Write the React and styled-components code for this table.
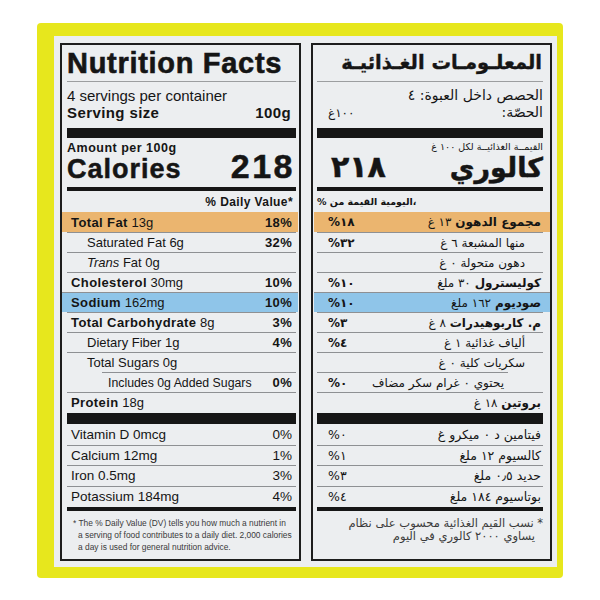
import React from 'react'
import styled, { createGlobalStyle } from 'styled-components'

const FONT_EN = '"Liberation Sans", Arial, sans-serif'
const FONT_AR = '"DejaVu Sans", "Noto Sans", sans-serif'

const TINTS = {
  fat: '#ebb56f',
  sodium: '#8fc5e9',
}

const GlobalStyle = createGlobalStyle`
  html, body {
    margin: 0;
    padding: 0;
    background: #ffffff;
  }
  body {
    font-family: ${FONT_EN};
    color: #151515;
  }
`

const EN = {
  dir: 'ltr',
  font: FONT_EN,
  padL: 5,
  padR: 3,
  rowS: 4,
  rowE: 4,
  rows: [
    { label: 'Total Fat', amount: '13g', pct: '18%', bold: true, tint: 'fat' },
    { label: 'Saturated Fat 6g', pct: '32%', indent: 1 },
    { label: <><i>Trans</i> Fat 0g</>, indent: 1 },
    { label: 'Cholesterol', amount: '30mg', pct: '10%', bold: true },
    { label: 'Sodium', amount: '162mg', pct: '10%', bold: true, tint: 'sodium' },
    { label: 'Total Carbohydrate', amount: '8g', pct: '3%', bold: true },
    { label: 'Dietary Fiber 1g', pct: '4%', indent: 1 },
    { label: 'Total Sugars 0g', indent: 1 },
    { label: 'Includes 0g Added Sugars', pct: '0%', indent: 2 },
    { label: 'Protein', amount: '18g', bold: true },
  ],
  vitamins: [
    { label: 'Vitamin D 0mcg', pct: '0%' },
    { label: 'Calcium 12mg', pct: '1%' },
    { label: 'Iron 0.5mg', pct: '3%' },
    { label: 'Potassium 184mg', pct: '4%' },
  ],
}

const AR = {
  dir: 'rtl',
  font: FONT_AR,
  padL: 4,
  padR: 7,
  rowS: 2,
  rowE: 11,
  rows: [
    { label: 'مجموع الدهون', amount: '١٣ غ', pct: '%١٨', bold: true, tint: 'fat' },
    { label: 'منها المشبعة ٦ غ', pct: '%٣٢', indent: 1 },
    { label: 'دهون متحولة ٠ غ', indent: 1 },
    { label: 'كوليسترول', amount: '٣٠ ملغ', pct: '%١٠', bold: true },
    { label: 'صوديوم', amount: '١٦٢ ملغ', pct: '%١٠', bold: true, tint: 'sodium' },
    { label: 'م. كاربوهيدرات', amount: '٨ غ', pct: '%٣', bold: true },
    { label: 'ألياف غذائية ١ غ', pct: '%٤', indent: 1 },
    { label: 'سكريات كلية ٠ غ', indent: 1 },
    { label: 'يحتوي ٠ غرام سكر مضاف', pct: '%٠', indent: 2 },
    { label: 'بروتين', amount: '١٨ غ', bold: true },
  ],
  vitamins: [
    { label: 'فيتامين د ٠ ميكرو غ', pct: '%٠' },
    { label: 'كالسيوم ١٢ ملغ', pct: '%١' },
    { label: 'حديد ٠٫٥ ملغ', pct: '%٣' },
    { label: 'بوتاسيوم ١٨٤ ملغ', pct: '%٤' },
  ],
}

const Stage = styled.main`
  width: 600px;
  height: 600px;
  box-sizing: border-box;
  padding: 23px 37px 22px 37px;
  display: flex;
  background: #ffffff;
`

const Packet = styled.div`
  flex: 1;
  display: flex;
  background: #e7e71d;
  border-radius: 4px;
  padding: 13px 6px 11px 17px;
`

const Sheet = styled.div`
  flex: 1;
  display: grid;
  grid-template-columns: 1fr 1fr;
  gap: 10px;
  background: #eceef0;
  padding: 7px 5px 6px 6px;
`

const Panel = styled.section`
  direction: ${p => p.$dir};
  font-family: ${p => p.$font};
  border: 2px solid #1d1d1d;
  padding: 0 ${p => p.$padR}px 0 ${p => p.$padL}px;
  display: flex;
  flex-direction: column;
  min-width: 0;
  color: #151515;
`

const Title = styled.h1`
  margin: 0;
  padding: 2px ${p => p.$inset || 0}px 2px;
  font-size: ${p => p.$size}px;
  line-height: 32px;
  font-weight: 700;
  letter-spacing: ${p => p.$spacing || 0}px;
  -webkit-text-stroke: ${p => p.$stroke || 0}px #151515;
  white-space: nowrap;
  border-bottom: 1px solid #9c9ea0;
`

const Servings = styled.div`
  margin-top: 5px;
  display: flex;
  flex-direction: column;
`

const Line = styled.div`
  display: flex;
  justify-content: space-between;
  align-items: baseline;
  height: 17px;
  line-height: 17px;
  font-size: ${p => p.$size || 15}px;
  font-weight: ${p => (p.$bold ? 700 : 400)};
  letter-spacing: ${p => (p.$bold ? 0.4 : 0)}px;
  padding-inline-end: ${p => p.$end || 0}px;
  white-space: nowrap;
`

const Small = styled.span`
  font-size: ${p => p.$size}px;
`

const Bar = styled.div`
  margin-top: ${p => p.$top || 0}px;
  height: ${p => p.$h}px;
  background: #161616;
  flex: none;
`

const Amount = styled.div`
  margin-top: ${p => p.$top}px;
  height: ${p => 18 - p.$top}px;
  line-height: 15px;
  font-size: ${p => p.$size}px;
  font-weight: ${p => (p.$bold ? 700 : 400)};
  letter-spacing: ${p => (p.$bold ? 0.5 : 0)}px;
  white-space: nowrap;
`

const CalRow = styled.div`
  margin-top: -1px;
  height: 23px;
  line-height: 23px;
  display: flex;
  justify-content: space-between;
  align-items: baseline;
  padding-inline-end: ${p => p.$end || 0}px;
  padding-inline-start: ${p => p.$start || 0}px;
`

const CalWord = styled.span`
  font-size: ${p => p.$size}px;
  font-weight: 700;
  letter-spacing: ${p => p.$spacing || 0}px;
  -webkit-text-stroke: 0.5px #151515;
`

const CalNum = styled.span`
  font-size: ${p => p.$size}px;
  font-weight: 700;
  letter-spacing: ${p => p.$spacing || 0}px;
  -webkit-text-stroke: 0.5px #151515;
`

const DV = styled.div`
  margin-top: 4px;
  height: 14px;
  line-height: 14px;
  font-size: ${p => p.$size}px;
  font-weight: 700;
  letter-spacing: ${p => p.$spacing || 0}px;
  text-align: end;
  padding-inline-end: ${p => p.$end || 0}px;
  padding-inline-start: ${p => p.$start || 0}px;
  white-space: nowrap;
`

const Rows = styled.div`
  margin-top: ${p => p.$top || 0}px;
  display: flex;
  flex-direction: column;
`

const Row = styled.div`
  display: flex;
  align-items: center;
  justify-content: space-between;
  box-sizing: border-box;
  height: ${p => p.$h}px;
  border-top: ${p => (p.$first ? 'none' : '1px solid #8e9093')};
  background: ${p => TINTS[p.$tint] || 'transparent'};
  margin-inline-start: ${p => (p.$tint ? -p.$bleedS : p.$indent === 2 ? 35 : 0)}px;
  margin-inline-end: ${p => (p.$tint ? -p.$bleedE : 0)}px;
  padding-inline-start: ${p =>
    p.$s + (p.$tint ? p.$bleedS : 0) + (p.$indent === 1 ? 16 : p.$indent === 2 ? 2 : 0)}px;
  padding-inline-end: ${p => p.$e + (p.$tint ? p.$bleedE : 0)}px;
  font-size: ${p => p.$size}px;
  white-space: nowrap;
`

const Name = styled.span`
  font-size: ${p => p.$size || 'inherit'};
`

const Strong = styled.b`
  font-weight: 700;
  letter-spacing: ${p => p.$spacing || 0}px;
`

const Pct = styled.span`
  direction: ltr;
  unicode-bidi: bidi-override;
  font-weight: ${p => (p.$bold ? 700 : 400)};
  letter-spacing: ${p => (p.$bold ? 0.3 : 0)}px;
`

const Foot = styled.div`
  margin-top: 6px;
  display: flex;
  flex-direction: column;
  color: #3a3a3a;
  font-size: ${p => p.$size}px;
  line-height: ${p => p.$lh}px;
  white-space: nowrap;
`

const FootLine = styled.span`
  padding-inline-start: ${p => p.$indent}px;
`

function NutrientRows({ lang, size, boldSpacing }) {
  return (
    <Rows $top={3}>
      {lang.rows.map((r, i) => (
        <Row
          key={i}
          $first={i === 0}
          $h={20}
          $tint={r.tint}
          $indent={r.indent}
          $s={lang.rowS}
          $e={lang.rowE}
          $bleedS={lang.dir === 'ltr' ? lang.padL : lang.padR}
          $bleedE={lang.dir === 'ltr' ? lang.padR - 1 : lang.padL - 1}
          $size={size}
        >
          <Name $size={r.indent === 2 && lang.dir === 'ltr' ? '12.3px' : null}>
            {r.bold ? <Strong $spacing={boldSpacing}>{r.label}</Strong> : r.label}
            {r.amount ? ' ' + r.amount : null}
          </Name>
          {r.pct ? <Pct $bold>{r.pct}</Pct> : null}
        </Row>
      ))}
    </Rows>
  )
}

function VitaminRows({ lang, size }) {
  return (
    <Rows>
      {lang.vitamins.map((r, i) => (
        <Row
          key={i}
          $first={i === 0}
          $h={20.5}
          $s={lang.rowS}
          $e={lang.rowE}
          $size={size}
        >
          <Name>{r.label}</Name>
          <Pct>{r.pct}</Pct>
        </Row>
      ))}
    </Rows>
  )
}

function EnglishLabel() {
  return (
    <Panel $dir="ltr" $font={EN.font} $padL={EN.padL} $padR={EN.padR}>
      <Title $size={29} $spacing={0.7} $stroke={0.6}>Nutrition Facts</Title>
      <Servings>
        <Line>4 servings per container</Line>
        <Line $bold $end={5}>
          <span>Serving size</span>
          <span>100g</span>
        </Line>
      </Servings>
      <Bar $top={7} $h={10} />
      <Amount $top={3} $size={12.5} $bold>Amount per 100g</Amount>
      <CalRow $end={1}>
        <CalWord $size={27} $spacing={1}>Calories</CalWord>
        <CalNum $size={34} $spacing={2.5}>218</CalNum>
      </CalRow>
      <Bar $top={9} $h={4} />
      <DV $size={12} $spacing={0.4} $end={3}>% Daily Value*</DV>
      <NutrientRows lang={EN} size={13} boldSpacing={0.4} />
      <Bar $top={1} $h={11} />
      <VitaminRows lang={EN} size={13.5} />
      <Bar $top={0.5} $h={4} />
      <Foot $size={8.4} $lh={12}>
        <FootLine $indent={6}>* The % Daily Value (DV) tells you how much a nutrient in</FootLine>
        <FootLine $indent={11}>a serving of food contributes to a daily diet. 2,000 calories</FootLine>
        <FootLine $indent={11}>a day is used for general nutrition advice.</FootLine>
      </Foot>
    </Panel>
  )
}

function ArabicLabel() {
  return (
    <Panel $dir="rtl" $font={AR.font} $padL={AR.padL} $padR={AR.padR}>
      <Title $size={19.5} $stroke={0.4} $inset={1}>المعلـومـات الغـذائيـة</Title>
      <Servings>
        <Line $size={14}>الحصص داخل العبوة: ٤</Line>
        <Line $size={14} $end={11}>
          <span>الحصّة:</span>
          <Small $size={12}>١٠٠غ</Small>
        </Line>
      </Servings>
      <Bar $top={7} $h={10} />
      <Amount $top={1} $size={9.5}>القيمــة الغذائيــة لكل ١٠٠ غ</Amount>
      <CalRow $end={14}>
        <CalWord $size={27}>كالوري</CalWord>
        <CalNum $size={30}>٢١٨</CalNum>
      </CalRow>
      <Bar $top={9} $h={4} />
      <DV $size={9.5}>
        <span dir="ltr">{'% من\u200E \u200Eالقيمة\u200E \u200Eاليومية،'}</span>
      </DV>
      <NutrientRows lang={AR} size={12} boldSpacing={0} />
      <Bar $top={1} $h={11} />
      <VitaminRows lang={AR} size={12.5} />
      <Bar $top={0.5} $h={4} />
      <Foot $size={11.5} $lh={13}>
        <FootLine $indent={0}>* نسب القيم الغذائية محسوب على نظام</FootLine>
        <FootLine $indent={8}>يساوي ٢٠٠٠ كالوري في اليوم</FootLine>
      </Foot>
    </Panel>
  )
}

export default function App() {
  return (
    <>
      <GlobalStyle />
      <Stage>
        <Packet>
          <Sheet>
            <EnglishLabel />
            <ArabicLabel />
          </Sheet>
        </Packet>
      </Stage>
    </>
  )
}
